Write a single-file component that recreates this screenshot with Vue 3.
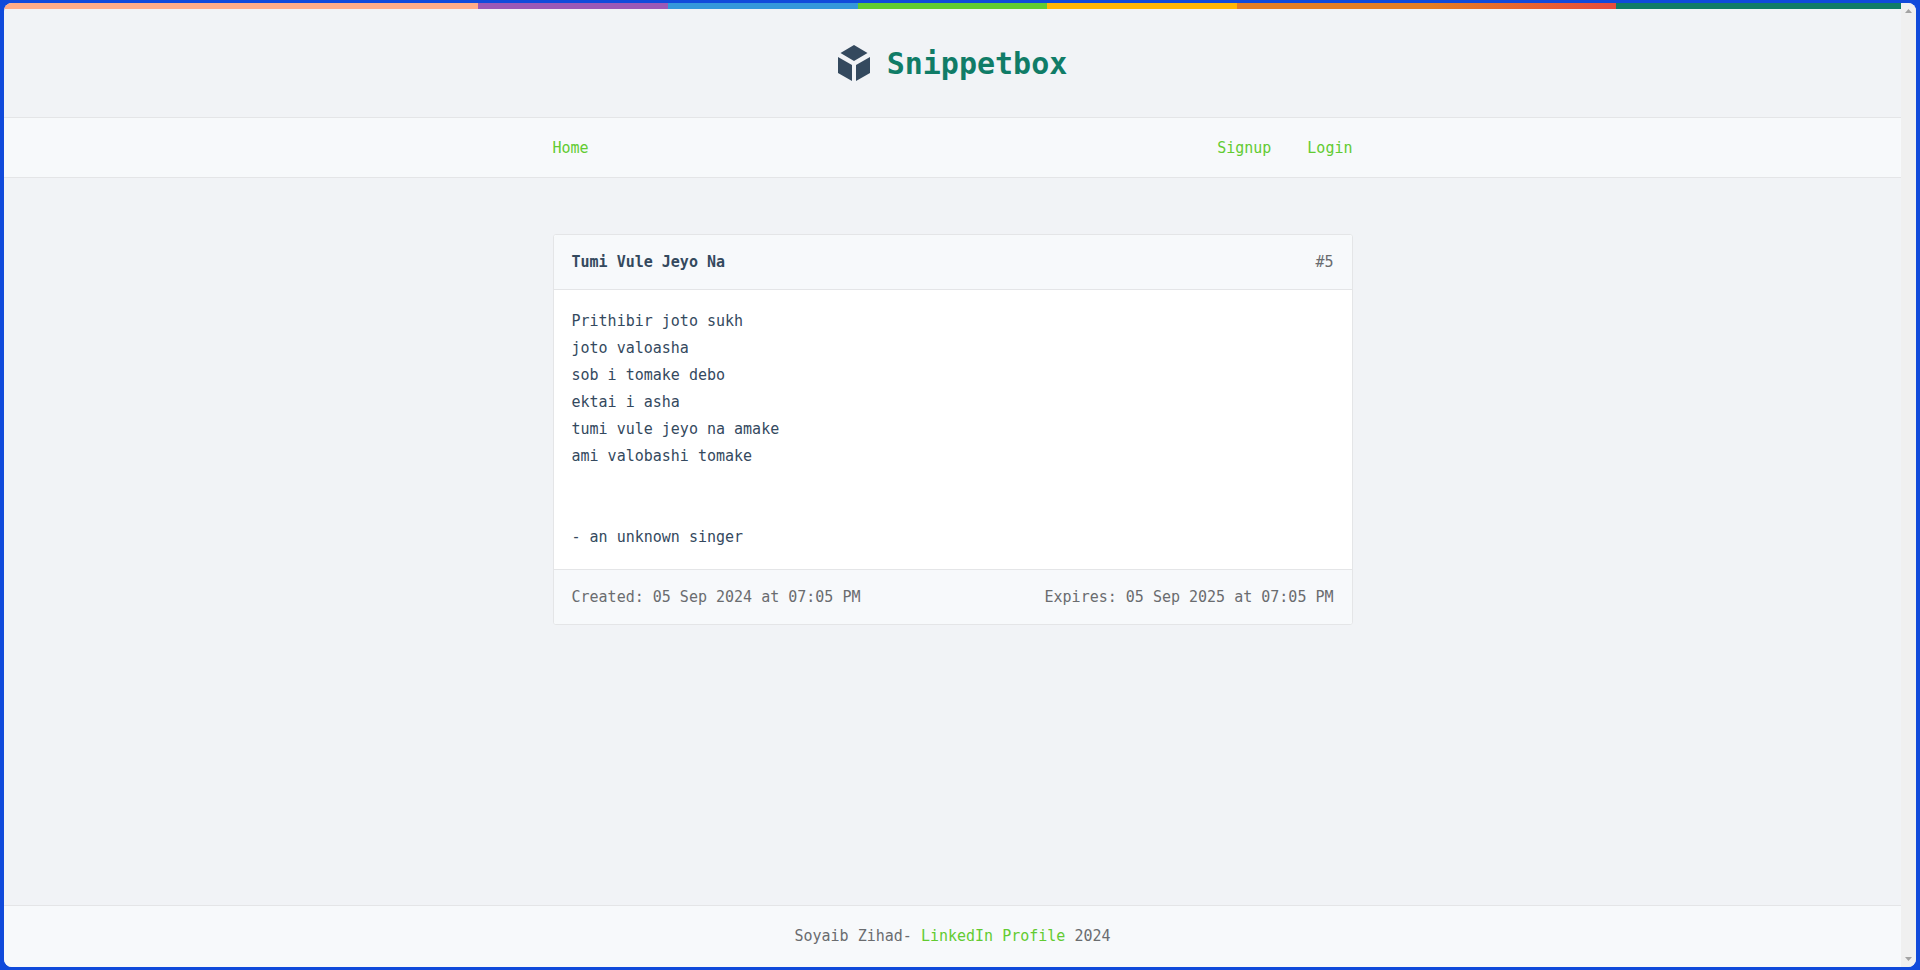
<script setup>
const snippet = {
  id: 5,
  title: 'Tumi Vule Jeyo Na',
  content: `Prithibir joto sukh
joto valoasha
sob i tomake debo
ektai i asha
tumi vule jeyo na amake
ami valobashi tomake


- an unknown singer`,
  created: '05 Sep 2024 at 07:05 PM',
  expires: '05 Sep 2025 at 07:05 PM'
}
</script>

<template>
  <div class="desktop">
    <div class="window">
      <div class="page">
        <div class="stripe"></div>
        <header class="masthead">
          <h1>
            <a class="brand" href="#">
              <svg class="logo" viewBox="0 0 32 36" aria-hidden="true">
                <path d="M16 0 29.5 8 16 16 2.5 8Z" />
                <path d="M0 12 14 20V36L0 28Z" />
                <path d="M32 12 18 20V36L32 28Z" />
              </svg>
              <span>Snippetbox</span>
            </a>
          </h1>
        </header>
        <nav class="nav">
          <div class="container nav-row">
            <a href="#">Home</a>
            <div class="account">
              <a href="#">Signup</a>
              <a href="#">Login</a>
            </div>
          </div>
        </nav>
        <main class="main">
          <article class="container snippet">
            <div class="metadata">
              <strong>{{ snippet.title }}</strong>
              <span>#{{ snippet.id }}</span>
            </div>
            <pre><code>{{ snippet.content }}</code></pre>
            <div class="metadata">
              <time>Created: {{ snippet.created }}</time>
              <time>Expires: {{ snippet.expires }}</time>
            </div>
          </article>
        </main>
        <footer class="footer">Soyaib Zihad- <a href="#">LinkedIn Profile</a> 2024</footer>
      </div>
      <div class="scrollbar" aria-hidden="true">
        <svg viewBox="0 0 7 4"><path d="M0 4 3.5 0 7 4Z" /></svg>
        <svg viewBox="0 0 7 4"><path d="M0 0H7L3.5 4Z" /></svg>
      </div>
    </div>
  </div>
</template>

<style>
body {
  margin: 0;
}
</style>

<style scoped>
.desktop {
  box-sizing: border-box;
  display: flex;
  min-height: 100vh;
  padding: 3px 4px;
  background: #104adb;
  font-family: "DejaVu Sans Mono", monospace;
  font-size: 15px;
  line-height: 27px;
  color: #34495e;
}
.window {
  flex: 1;
  display: flex;
  overflow: hidden;
  border-radius: 8px;
  background: #f1f3f6;
}
.page {
  flex: 1;
  min-width: 0;
  display: flex;
  flex-direction: column;
}
.stripe {
  height: 6px;
  background: linear-gradient(
    to right,
    #ffac88 25%,
    #9b59b6 25% 35%,
    #3498db 35% 45%,
    #62cb31 45% 55%,
    #ffb606 55% 65%,
    #e67e22 65% 75%,
    #e74c3c 85%,
    #107c67 85%
  );
}
.masthead {
  display: flex;
  justify-content: center;
  padding: 36px 18px 34px;
  border-bottom: 1px solid #e4e5e7;
}
h1 {
  margin: 0;
  font-size: 30px;
  line-height: 38px;
}
.brand {
  display: flex;
  align-items: flex-start;
  gap: 17px;
  color: #107c67;
}
.logo {
  width: 32px;
  height: 36px;
  fill: #34495e;
}
a {
  color: #62cb31;
  text-decoration: none;
}
.container {
  box-sizing: border-box;
  width: 100%;
  max-width: 800px;
  margin: 0 auto;
}
.nav {
  padding: 17px 16px 15px;
  background: #f7f9fb;
  border-bottom: 1px solid #e4e5e7;
}
.nav-row,
.metadata {
  display: flex;
  justify-content: space-between;
}
.account {
  display: flex;
  gap: 36px;
}
.main {
  flex: 1;
  padding: 56px 18px;
}
.snippet {
  overflow: hidden;
  background: #fff;
  border: 1px solid #e4e5e7;
  border-radius: 3px;
}
.metadata {
  padding: 14px 18px 13px;
  background: #f7f9fb;
  color: #6a6c6f;
}
.metadata strong {
  color: #34495e;
}
pre {
  margin: 0;
  padding: 18px;
  border: solid #e4e5e7;
  border-width: 1px 0;
  overflow-x: auto;
}
pre,
code {
  font-family: inherit;
}
.footer {
  padding: 17px;
  background: #f7f9fb;
  border-top: 1px solid #e4e5e7;
  color: #6a6c6f;
  text-align: center;
}
.scrollbar {
  box-sizing: border-box;
  width: 15px;
  padding: 6px 4px;
  display: flex;
  flex-direction: column;
  justify-content: space-between;
  background: #f0f0f0;
}
.scrollbar svg {
  width: 7px;
  height: 4px;
  fill: #a3a3a3;
}
</style>
